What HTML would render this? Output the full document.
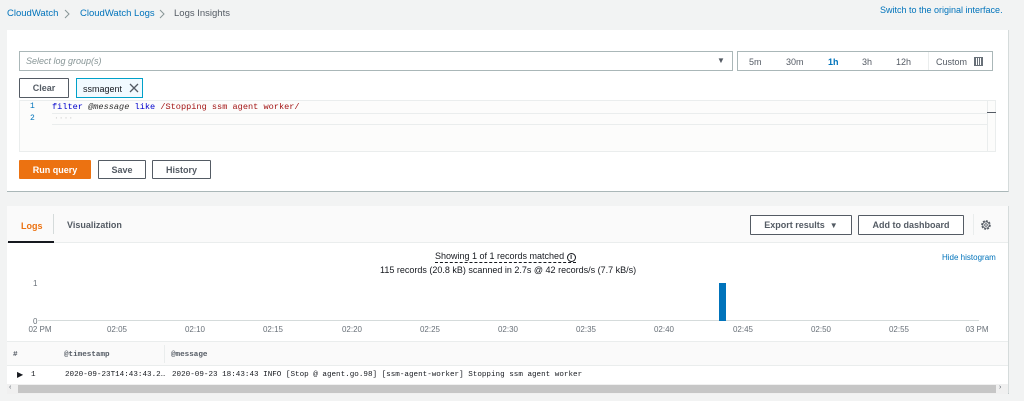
<!DOCTYPE html>
<html><head><meta charset="utf-8"><style>
*{box-sizing:border-box;margin:0;padding:0}
body{width:1024px;height:401px;background:#f2f3f3;font-family:"Liberation Sans",sans-serif;font-size:9px;color:#16191f;position:relative;overflow:hidden}
.a{position:absolute}
.btn{position:absolute;border:1px solid #545b64;background:#fff;font-weight:bold;font-size:9px;color:#545b64;display:flex;align-items:center;justify-content:center;border-radius:1px}
.mono{font-family:"Liberation Mono",monospace}
.tk{position:absolute;top:325px;font-size:8px;color:#687078;transform:translateX(-50%)}
</style></head><body>
<div class="a" style="left:7px;top:8px;color:#0073bb;font-size:9.5px">CloudWatch</div>
<svg class="a" style="left:64px;top:9px" width="6" height="10"><path d="M1 1L5 5L1 9" fill="none" stroke="#879596" stroke-width="1"/></svg>
<div class="a" style="left:80px;top:8px;color:#0073bb;font-size:9.5px">CloudWatch Logs</div>
<svg class="a" style="left:159px;top:9px" width="6" height="10"><path d="M1 1L5 5L1 9" fill="none" stroke="#879596" stroke-width="1"/></svg>
<div class="a" style="left:174px;top:8px;color:#545b64;font-size:9.5px">Logs Insights</div>
<div class="a" style="left:880px;top:5px;color:#0073bb">Switch to the original interface.</div>

<div class="a" style="left:7px;top:30px;width:1002px;height:162px;background:#fff;border-bottom:1px solid #aab7b8;border-right:1px solid #d5dbdb"></div>
<div class="a" style="left:19px;top:51px;width:714px;height:20px;border:1px solid #aab7b8;"></div>
<div class="a" style="left:26px;top:56px;color:#879596;font-style:italic">Select log group(s)</div>
<div class="a" style="left:717px;top:56px;font-size:8px;color:#545b64">▼</div>
<div class="a" style="left:737px;top:51px;width:256px;height:20px;border:1px solid #aab7b8"></div>
<div class="a" style="left:928px;top:52px;width:1px;height:18px;background:#eaeded"></div>
<div class="a" style="left:749px;top:57px;color:#545b64">5m</div>
<div class="a" style="left:786px;top:57px;color:#545b64">30m</div>
<div class="a" style="left:828px;top:57px;color:#0073bb;font-weight:bold">1h</div>
<div class="a" style="left:862px;top:57px;color:#545b64">3h</div>
<div class="a" style="left:896px;top:57px;color:#545b64">12h</div>
<div class="a" style="left:936px;top:57px;color:#545b64">Custom</div>
<div class="a" style="left:974px;top:57px;width:9px;height:9px;border:1px solid #687078;background:repeating-linear-gradient(90deg,#687078 0 1px,#fff 1px 2px)"></div>

<div class="btn" style="left:19px;top:78px;width:50px;height:20px">Clear</div>
<div class="a" style="left:76px;top:78px;width:67px;height:20px;border:1px solid #00a1c9;background:#f1faff;padding:5px 6px;font-size:9px">ssmagent</div>
<svg class="a" style="left:129px;top:83px" width="10" height="10"><path d="M1 1L9 9M9 1L1 9" stroke="#545b64" stroke-width="1.3"/></svg>

<div class="a" style="left:19px;top:100px;width:977px;height:52px;border:1px solid #eaeded;background:#fcfcfb"></div>
<div class="a" style="left:52px;top:113px;width:935px;height:12px;border-top:1px solid #eaeded;border-bottom:1px solid #eaeded"></div>
<div class="a" style="left:987px;top:101px;width:1px;height:50px;background:#eaeded"></div>
<div class="a" style="left:987px;top:112px;width:9px;height:1px;background:#545b64"></div>
<div class="a mono" style="left:30px;top:102px;color:#0073bb;font-size:8px">1</div>
<div class="a mono" style="left:30px;top:114px;color:#0073bb;font-size:8px">2</div>
<div class="a mono" style="left:52px;top:102px;font-size:8.6px;color:#0000cc">filter <span style="color:#333;font-style:italic">@message</span> like <span style="color:#a31515">/Stopping ssm agent worker/</span></div>
<div class="a mono" style="left:54px;top:114px;font-size:8px;color:#ccc">····</div>

<div class="a" style="left:19px;top:160px;width:72px;height:19px;background:#ec7211;color:#fff;font-weight:bold;display:flex;align-items:center;justify-content:center;border-radius:1px">Run query</div>
<div class="btn" style="left:98px;top:160px;width:48px;height:19px">Save</div>
<div class="btn" style="left:152px;top:160px;width:59px;height:19px">History</div>

<div class="a" style="left:7px;top:206px;width:1002px;height:188px;background:#fff;border-bottom:1px solid #aab7b8;border-right:1px solid #d5dbdb"></div>
<div class="a" style="left:7px;top:206px;width:1001px;height:37px;background:#fafafa;border-bottom:1px solid #eaeded"></div>
<div class="a" style="left:21px;top:221px;color:#ec7211;font-weight:bold">Logs</div>
<div class="a" style="left:8px;top:241px;width:46px;height:2px;background:#16191f"></div>
<div class="a" style="left:53px;top:214px;width:1px;height:20px;background:#d5dbdb"></div>
<div class="a" style="left:67px;top:220px;color:#545b64;font-weight:bold">Visualization</div>
<div class="btn" style="left:750px;top:215px;width:102px;height:20px">Export results &nbsp;<span style="font-size:8px">▼</span></div>
<div class="btn" style="left:858px;top:215px;width:106px;height:20px">Add to dashboard</div>
<div class="a" style="left:973px;top:214px;width:1px;height:21px;background:#eaeded"></div>
<svg class="a" style="left:980px;top:219px" width="12" height="12" viewBox="0 0 12 12"><circle cx="6" cy="6" r="4" fill="none" stroke="#545b64" stroke-width="1.6" stroke-dasharray="2 1.1"/><circle cx="6" cy="6" r="3.2" fill="none" stroke="#545b64" stroke-width="0.8"/><circle cx="6" cy="6" r="1.3" fill="none" stroke="#545b64" stroke-width="0.9"/></svg>

<div class="a" style="left:435px;top:251px;border-bottom:1px dashed #16191f;font-size:9px">Showing 1 of 1 records matched <span style="display:inline-block;width:9px;height:9px;border:1px solid #16191f;border-radius:50%;font-size:7px;text-align:center;line-height:7px;font-weight:bold">i</span></div>
<div class="a" style="left:380px;top:265px;font-size:9px">115 records (20.8 kB) scanned in 2.7s @ 42 records/s (7.7 kB/s)</div>
<div class="a" style="left:942px;top:253px;color:#0073bb;font-size:8px">Hide histogram</div>
<div class="a" style="left:33px;top:279px;font-size:8px;color:#687078">1</div>
<div class="a" style="left:33px;top:317px;font-size:8px;color:#687078">0</div>
<div class="a" style="left:38px;top:320px;width:941px;height:1px;background:#d5dbdb"></div>
<div class="a" style="left:719px;top:283px;width:7px;height:38px;background:#0073bb"></div>
<div class="tk" style="left:40px">02 PM</div><div class="tk" style="left:117px">02:05</div><div class="tk" style="left:195px">02:10</div><div class="tk" style="left:273px">02:15</div><div class="tk" style="left:352px">02:20</div><div class="tk" style="left:430px">02:25</div><div class="tk" style="left:508px">02:30</div><div class="tk" style="left:586px">02:35</div><div class="tk" style="left:664px">02:40</div><div class="tk" style="left:743px">02:45</div><div class="tk" style="left:821px">02:50</div><div class="tk" style="left:899px">02:55</div><div class="tk" style="left:977px">03 PM</div>

<div class="a" style="left:7px;top:341px;width:1001px;height:25px;background:#fafafa;border-top:1px solid #eaeded;border-bottom:1px solid #eaeded"></div>
<div class="a mono" style="left:13px;top:351px;font-size:7.6px;font-weight:bold;color:#545b64">#</div>
<div class="a mono" style="left:64px;top:351px;font-size:7.6px;font-weight:bold;color:#545b64">@timestamp</div>
<div class="a" style="left:164px;top:345px;width:1px;height:18px;background:#eaeded"></div>
<div class="a mono" style="left:171px;top:351px;font-size:7.6px;font-weight:bold;color:#545b64">@message</div>
<div class="a" style="left:17px;top:370px;font-size:8px">▶</div>
<div class="a mono" style="left:31px;top:371px;font-size:7.6px">1</div>
<div class="a mono" style="left:65px;top:371px;font-size:7.6px">2020-09-23T14:43:43.2…</div>
<div class="a mono" style="left:172px;top:371px;font-size:7.6px">2020-09-23 18:43:43 INFO [Stop @ agent.go.98] [ssm-agent-worker] Stopping ssm agent worker</div>
<div class="a" style="left:7px;top:384px;width:1001px;height:10px;background:#f0f0f0"></div>
<div class="a" style="left:18px;top:385px;width:978px;height:8px;background:#c6c6c6"></div>
<div class="a" style="left:9px;top:384px;font-size:7px;color:#545b64">‹</div>
<div class="a" style="left:999px;top:384px;font-size:7px;color:#545b64">›</div>
</body></html>
